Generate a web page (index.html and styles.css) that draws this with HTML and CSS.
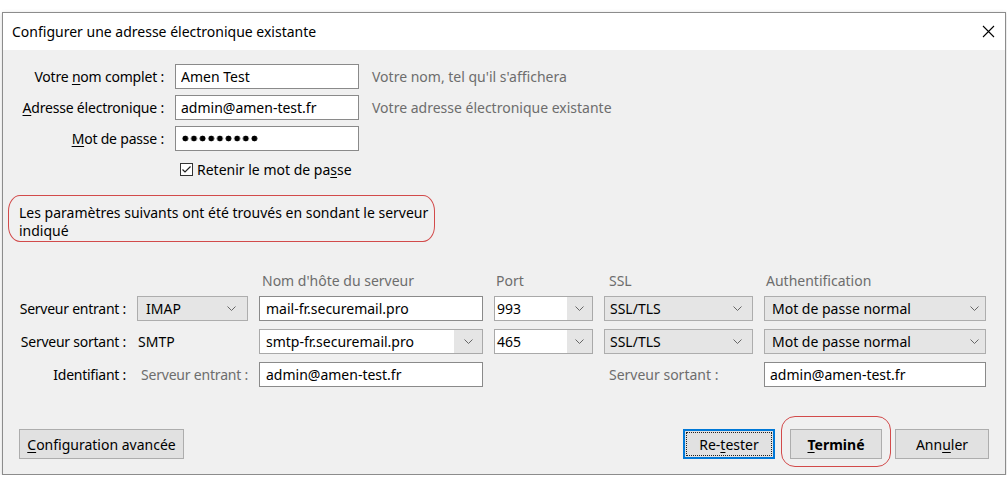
FILE: index.html
```html
<!DOCTYPE html>
<html lang="fr">
<head>
  <meta charset="UTF-8" />
  <title>Configurer une adresse électronique existante</title>
  <link rel="stylesheet" href="styles.css">
</head>
<body>
  <div class="window">
    <div class="titlebar">
      <span class="title">Configurer une adresse électronique existante</span>
      <svg class="close" width="13" height="13" viewBox="0 0 13 13"><path d="M1 1L12 12M12 1L1 12" stroke="#000" stroke-width="1.1" fill="none"/></svg>
    </div>

    <div class="content">
      <div class="identity">
        <label class="lbl">Votre <u>n</u>om complet :</label>
        <input class="field" value="Amen Test" />
        <span class="hint">Votre nom, tel qu'il s'affichera</span>

        <label class="lbl"><u>A</u>dresse électronique :</label>
        <input class="field" value="admin@amen-test.fr" />
        <span class="hint">Votre adresse électronique existante</span>

        <label class="lbl"><u>M</u>ot de passe :</label>
        <div class="field secret"><span class="dots"></span></div>
        <span></span>

        <span></span>
        <label class="remember">
          <svg width="13" height="13" viewBox="0 0 13 13"><rect x="0.5" y="0.5" width="12" height="12" fill="#fff" stroke="#333"/><path d="M2.5 6.5L5 9L10.5 3.5" fill="none" stroke="#222" stroke-width="1.2"/></svg>
          <span>Retenir le mot de pa<u>s</u>se</span>
        </label>
      </div>

      <p class="found">Les paramètres suivants ont été trouvés en sondant le serveur<br>indiqué</p>

      <div class="servers">
        <span class="head host">Nom d'hôte du serveur</span>
        <span class="head">Port</span>
        <span class="head ssl">SSL</span>
        <span class="head">Authentification</span>

        <span class="row-label">Serveur entrant :</span>
        <div class="select imap">IMAP<svg class="chev" width="9" height="5" viewBox="0 0 9 5"><path d="M0.5 0.5L4.5 4.5L8.5 0.5" fill="none" stroke="#666"/></svg></div>
        <input class="field host-field" value="mail-fr.securemail.pro" />
        <div class="combo port"><span class="combo-text">993</span><span class="combo-btn"><svg class="chev" width="9" height="5" viewBox="0 0 9 5"><path d="M0.5 0.5L4.5 4.5L8.5 0.5" fill="none" stroke="#666"/></svg></span></div>
        <div class="select">SSL/TLS<svg class="chev" width="9" height="5" viewBox="0 0 9 5"><path d="M0.5 0.5L4.5 4.5L8.5 0.5" fill="none" stroke="#666"/></svg></div>
        <div class="select auth">Mot de passe normal<svg class="chev" width="9" height="5" viewBox="0 0 9 5"><path d="M0.5 0.5L4.5 4.5L8.5 0.5" fill="none" stroke="#666"/></svg></div>

        <span class="row-label">Serveur sortant :</span>
        <span class="proto">SMTP</span>
        <div class="combo host-combo"><span class="combo-text">smtp-fr.securemail.pro</span><span class="combo-btn"><svg class="chev" width="9" height="5" viewBox="0 0 9 5"><path d="M0.5 0.5L4.5 4.5L8.5 0.5" fill="none" stroke="#666"/></svg></span></div>
        <div class="combo port"><span class="combo-text">465</span><span class="combo-btn"><svg class="chev" width="9" height="5" viewBox="0 0 9 5"><path d="M0.5 0.5L4.5 4.5L8.5 0.5" fill="none" stroke="#666"/></svg></span></div>
        <div class="select">SSL/TLS<svg class="chev" width="9" height="5" viewBox="0 0 9 5"><path d="M0.5 0.5L4.5 4.5L8.5 0.5" fill="none" stroke="#666"/></svg></div>
        <div class="select auth">Mot de passe normal<svg class="chev" width="9" height="5" viewBox="0 0 9 5"><path d="M0.5 0.5L4.5 4.5L8.5 0.5" fill="none" stroke="#666"/></svg></div>

        <span class="row-label">Identifiant :</span>
        <span class="muted in-user">Serveur entrant :</span>
        <input class="field host-field" value="admin@amen-test.fr" />
        <span></span>
        <span class="muted out-user">Serveur sortant :</span>
        <input class="field user-out" value="admin@amen-test.fr" />
      </div>

      <div class="actions">
        <button class="btn advanced"><u>C</u>onfiguration avancée</button>
        <span class="spacer"></span>
        <button class="btn focused">Re-<u>t</u>ester</button>
        <button class="btn default"><u>T</u>erminé</button>
        <button class="btn">Ann<u>u</u>ler</button>
      </div>
    </div>
  </div>
</body>
</html>
```

FILE: styles.css
```css
body {
  margin: 0;
  background: #fff;
  font-family: "Noto Sans", "Open Sans", sans-serif;
  font-size: 14px;
  color: #000;
}

u {
  text-decoration: underline;
  text-underline-offset: 2px;
}

.window {
  box-sizing: border-box;
  width: 1004px;
  height: 463px;
  margin: 12px 0 0 2px;
  border: 1px solid #8c8c8c;
  box-shadow: 0 1px 4px rgba(0,0,0,0.18);
  display: flex;
  flex-direction: column;
}

.titlebar {
  flex: none;
  height: 37px;
  background: #fff;
  display: flex;
  align-items: center;
  justify-content: space-between;
  padding: 0 10px 0 9px;
}

.content {
  flex: 1;
  background: #f0f0f0;
  padding: 14px 16px 15px;
  display: flex;
  flex-direction: column;
}

/* identity block */
.identity {
  display: grid;
  grid-template-columns: 145px 184px auto;
  grid-auto-rows: 25px;
  column-gap: 11px;
  row-gap: 6px;
  align-items: center;
}

.lbl {
  justify-self: end;
  white-space: nowrap;
  letter-spacing: -0.2px;
}

.field {
  box-sizing: border-box;
  width: 100%;
  height: 25px;
  margin: 0;
  padding: 0 5px;
  border: 1px solid #8a8a8a;
  background: #fff;
  font: inherit;
  color: #000;
}

.secret {
  display: flex;
  align-items: center;
}

.dots {
  width: 78px;
  height: 7px;
  background: radial-gradient(circle, #000 2.6px, transparent 3.2px) 0 0 / 8.65px 7px repeat-x;
}

.hint {
  color: #6d6d6d;
  margin-left: 2px;
  white-space: nowrap;
}

.remember {
  grid-column: 2 / 4;
  display: flex;
  align-items: center;
  gap: 4px;
  padding-left: 5px;
}

/* probe result note */
.found {
  position: relative;
  width: 416px;
  margin: 22px 0 0;
  line-height: 18px;
}

.found::before {
  content: "";
  position: absolute;
  left: -11px;
  right: 0;
  top: -9px;
  bottom: -2px;
  border: 1px solid #d24a4a;
  border-radius: 12px / 16px;
}

/* server settings table */
.servers {
  display: grid;
  grid-template-columns: 107px 111px 224px 99px 149px 222px;
  grid-template-rows: 14px 25px 25px 25px;
  column-gap: 11px;
  row-gap: 8px;
  align-items: center;
  margin-top: 34px;
}

.head {
  color: #6d6d6d;
  line-height: 14px;
  padding-left: 2px;
}

.head.host {
  grid-column: 3;
  padding-left: 3px;
}

.head.ssl {
  padding-left: 5px;
}

.head:last-child {
  padding-left: 3px;
}

.row-label {
  justify-self: end;
  white-space: nowrap;
  letter-spacing: -0.25px;
}

.muted {
  color: #6d6d6d;
  white-space: nowrap;
}

.proto {
  padding-left: 1px;
}

.in-user {
  padding-left: 4px;
  letter-spacing: -0.2px;
}

.out-user {
  padding-left: 5px;
}

.host-field {
  padding-left: 6px;
}

.select {
  box-sizing: border-box;
  height: 25px;
  border: 1px solid #adadad;
  background: #e5e5e5;
  display: flex;
  align-items: center;
  justify-content: space-between;
  padding: 0 10px 0 5px;
}

.select.imap {
  padding-left: 8px;
  padding-right: 11px;
}

.select.auth {
  padding-left: 7px;
  padding-right: 6px;
}

.combo {
  box-sizing: border-box;
  height: 25px;
  border: 1px solid #a9a9a9;
  display: flex;
}

.combo-text {
  flex: 1;
  background: #fff;
  display: flex;
  align-items: center;
  padding-left: 2px;
}

.host-combo .combo-text {
  padding-left: 6px;
}

.combo-btn {
  width: 25px;
  background: #e5e5e5;
  display: flex;
  align-items: center;
  justify-content: center;
}

.host-combo .combo-btn {
  width: 28px;
}

.chev {
  flex: none;
}

/* dialog buttons */
.actions {
  margin-top: auto;
  display: flex;
  align-items: center;
}

.spacer {
  flex: 1;
}

.btn {
  box-sizing: border-box;
  height: 30px;
  min-width: 92px;
  padding: 0 8px;
  border: 1px solid #adadad;
  background: #e1e1e1;
  font: inherit;
  color: #000;
  white-space: nowrap;
}

.advanced {
  width: 165px;
  padding: 0;
}

.focused {
  position: relative;
  border: 2px solid #0078d7;
  margin-right: 15px;
}

.focused::after {
  content: "";
  position: absolute;
  inset: 1px;
  border: 1px dotted #222;
}

.default {
  position: relative;
  font-weight: bold;
  margin-right: 13px;
}

.default::after {
  content: "";
  position: absolute;
  left: -10px;
  right: -10px;
  top: -14px;
  bottom: -9px;
  border: 1px solid #d24a4a;
  border-radius: 14px;
}

.btn:last-child {
  width: 94px;
}
```
